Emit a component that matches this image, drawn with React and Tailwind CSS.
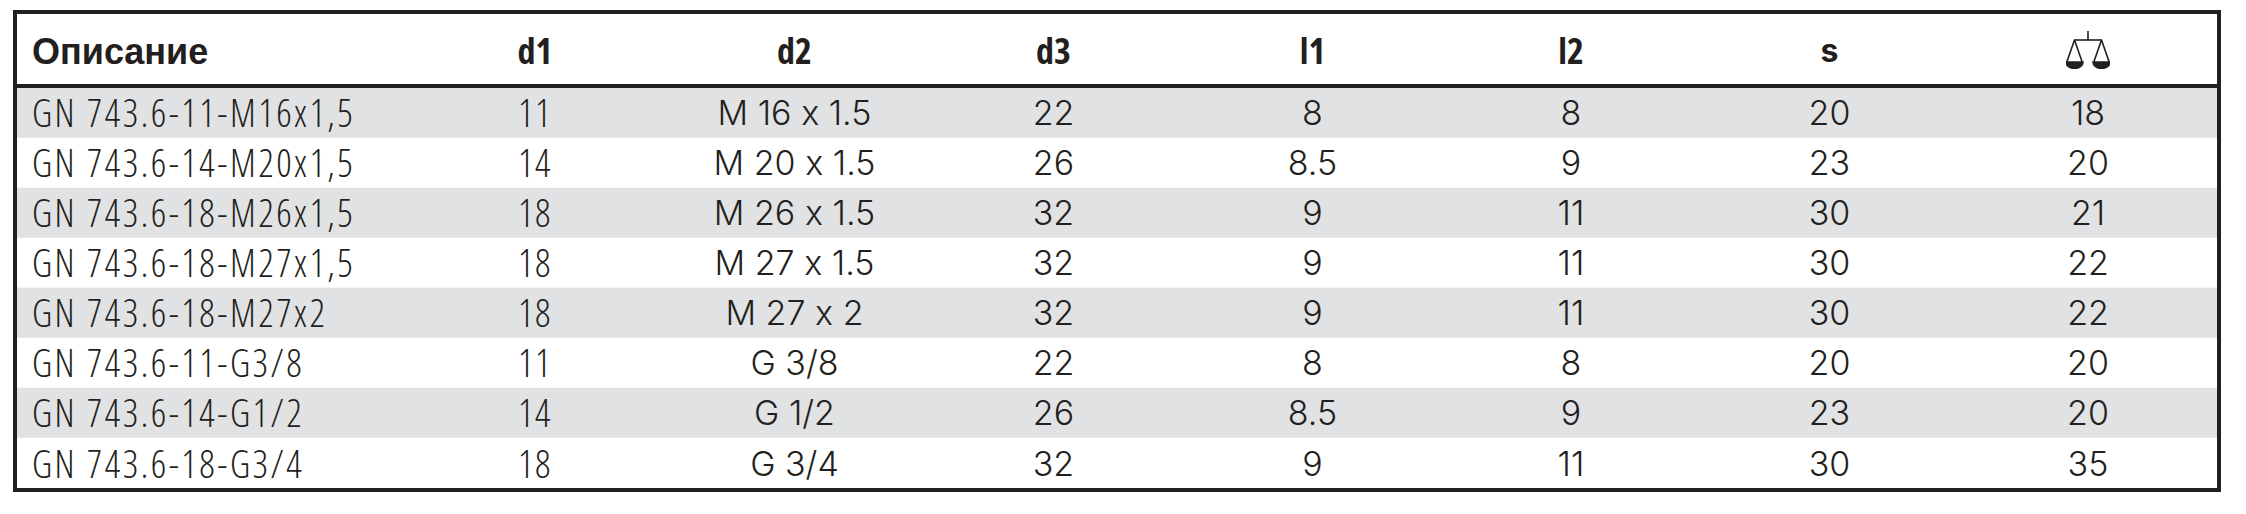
import React from 'react';

const rows = [
  ['GN 743.6-11-M16x1,5', '11', 'M 16 x 1.5', '22', '8', '8', '20', '18'],
  ['GN 743.6-14-M20x1,5', '14', 'M 20 x 1.5', '26', '8.5', '9', '23', '20'],
  ['GN 743.6-18-M26x1,5', '18', 'M 26 x 1.5', '32', '9', '11', '30', '21'],
  ['GN 743.6-18-M27x1,5', '18', 'M 27 x 1.5', '32', '9', '11', '30', '22'],
  ['GN 743.6-18-M27x2', '18', 'M 27 x 2', '32', '9', '11', '30', '22'],
  ['GN 743.6-11-G3/8', '11', 'G 3/8', '22', '8', '8', '20', '20'],
  ['GN 743.6-14-G1/2', '14', 'G 1/2', '26', '8.5', '9', '23', '20'],
  ['GN 743.6-18-G3/4', '18', 'G 3/4', '32', '9', '11', '30', '35'],
];

const narrow = "font-['Open_Sans',sans-serif] [font-stretch:75%] whitespace-nowrap";
const wide = "font-['Inter','Liberation_Sans',sans-serif] [font-feature-settings:'calt'_0] whitespace-nowrap";
const cols = 'grid grid-cols-[388px_260px_259px_259px_259px_258px_259px_258px]';

// balance scale icon for the weight column
const Scale = () => (
  <svg width="44" height="38" viewBox="0 0 44 38" fill="none" stroke="#231f20" strokeWidth="1.6">
    <line x1="22" y1="0" x2="22" y2="9" />
    <line x1="8" y1="9" x2="36" y2="9" />
    <path d="M8.5 9 L0.8 31 M8.5 9 L16.2 31" />
    <path d="M35.5 9 L27.8 31 M35.5 9 L43.2 31" />
    <path d="M0 31 A8.5 6.5 0 0 0 17 31 Z" fill="#231f20" />
    <path d="M27 31 A8.5 6.5 0 0 0 44 31 Z" fill="#231f20" />
  </svg>
);

const HeadCell = ({ children }) => (
  <div className={`flex items-center justify-center pt-[4px] ${narrow} text-[36px] font-bold`}>
    {children}
  </div>
);

export default function App() {
  return (
    <div className="bg-white w-[2246px] h-[514px] pt-[10px] pl-[13px] text-[#231f20]">
      <div className="w-[2208px] border-4 border-[#231f20]">
        <div className={`${cols} h-[74px] border-b-4 border-[#231f20]`}>
          <div className="flex items-center pl-[15px] pt-[6px] font-['Liberation_Sans',sans-serif] text-[36px] font-bold">
            Описание
          </div>
          <HeadCell>d1</HeadCell>
          <HeadCell>d2</HeadCell>
          <HeadCell>d3</HeadCell>
          <HeadCell>l1</HeadCell>
          <HeadCell>l2</HeadCell>
          <div className={`flex items-center justify-center pt-[4px] ${wide} text-[32px] font-bold`}>s</div>
          <div className="flex items-center justify-center pt-[2px]">
            <Scale />
          </div>
        </div>
        {rows.map((r, i) => (
          <div
            key={i}
            className={`${cols} h-[50px] ${i % 2 === 0 ? 'bg-[#e1e2e4]' : 'bg-white'} ${i < rows.length - 1 ? 'border-b border-dotted border-[#ededed]' : ''}`}
          >
            <div className={`flex items-center pl-[15px] pb-[1px] ${narrow} font-light text-[38px] tracking-[2.5px] leading-none`}>
              {r[0]}
            </div>
            <div className={`flex items-center justify-center pb-[1px] ${narrow} font-light text-[38px] tracking-[1.5px] leading-none`}>
              {r[1]}
            </div>
            {r.slice(2).map((v, j) => (
              <div key={j} className={`flex items-center justify-center pt-[1px] ${wide} font-light text-[34px] leading-none`}>
                {v}
              </div>
            ))}
          </div>
        ))}
      </div>
    </div>
  );
}
